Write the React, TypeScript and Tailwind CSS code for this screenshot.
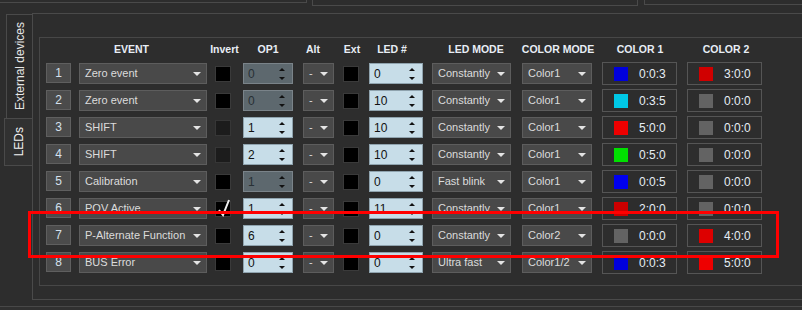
import React from 'react';

type Swatch = { color: string; value: string };

interface LedRow {
  n: number;
  event: string;
  invert: 'off' | 'dim' | 'on';
  op1: string;
  op1Disabled: boolean;
  led: string;
  mode: string;
  colorMode: string;
  c1: Swatch;
  c2: Swatch;
}

const GRAY = '#636363';

// rows of the LED table, top to bottom
const rows: LedRow[] = [
  { n: 1, event: 'Zero event', invert: 'off', op1: '0', op1Disabled: true, led: '0', mode: 'Constantly', colorMode: 'Color1', c1: { color: '#0000dc', value: '0:0:3' }, c2: { color: '#d00000', value: '3:0:0' } },
  { n: 2, event: 'Zero event', invert: 'off', op1: '0', op1Disabled: true, led: '10', mode: 'Constantly', colorMode: 'Color1', c1: { color: '#00c8e6', value: '0:3:5' }, c2: { color: GRAY, value: '0:0:0' } },
  { n: 3, event: 'SHIFT', invert: 'dim', op1: '1', op1Disabled: false, led: '10', mode: 'Constantly', colorMode: 'Color1', c1: { color: '#ee0000', value: '5:0:0' }, c2: { color: GRAY, value: '0:0:0' } },
  { n: 4, event: 'SHIFT', invert: 'dim', op1: '2', op1Disabled: false, led: '10', mode: 'Constantly', colorMode: 'Color1', c1: { color: '#00e000', value: '0:5:0' }, c2: { color: GRAY, value: '0:0:0' } },
  { n: 5, event: 'Calibration', invert: 'off', op1: '1', op1Disabled: true, led: '0', mode: 'Fast blink', colorMode: 'Color1', c1: { color: '#0000ee', value: '0:0:5' }, c2: { color: GRAY, value: '0:0:0' } },
  { n: 6, event: 'POV Active', invert: 'on', op1: '1', op1Disabled: false, led: '11', mode: 'Constantly', colorMode: 'Color1', c1: { color: '#cc0000', value: '2:0:0' }, c2: { color: GRAY, value: '0:0:0' } },
  { n: 7, event: 'P-Alternate Function', invert: 'off', op1: '6', op1Disabled: false, led: '0', mode: 'Constantly', colorMode: 'Color2', c1: { color: GRAY, value: '0:0:0' }, c2: { color: '#dd0000', value: '4:0:0' } },
  { n: 8, event: 'BUS Error', invert: 'off', op1: '0', op1Disabled: false, led: '0', mode: 'Ultra fast', colorMode: 'Color1/2', c1: { color: '#0000dc', value: '0:0:3' }, c2: { color: '#ee0000', value: '5:0:0' } },
];

function DownArrow() {
  return (
    <svg width="8" height="4" viewBox="0 0 8 4" className="shrink-0">
      <polygon points="0,0 8,0 4,4" fill="#e4e4e4" />
    </svg>
  );
}

function Dropdown({ text, className }: { text: string; className: string }) {
  return (
    <div className={`shrink-0 mt-px h-[21px] flex items-center justify-between pl-[5px] pr-[5px] bg-[#494949] border border-[#5d5d5d] text-[11px] text-[#dcdcdc] whitespace-nowrap overflow-hidden ${className}`}>
      <span>{text}</span>
      <DownArrow />
    </div>
  );
}

function SpinBox({ value, disabled, className }: { value: string; disabled: boolean; className: string }) {
  return (
    <div
      className={`shrink-0 mt-px h-[21px] flex items-center justify-between pl-[4px] pr-[7px] border text-[12px] ${
        disabled ? 'bg-[#5d686e] border-[#7a8389] text-[#283035]' : 'bg-[#c7dde8] border-[#8fa3ae] text-[#111111]'
      } ${className}`}
    >
      <span>{value}</span>
      <svg width="6" height="12" viewBox="0 0 6 12">
        <polygon points="3,0 6,3 0,3" fill="#111" />
        <polygon points="0,9 6,9 3,12" fill="#111" />
      </svg>
    </div>
  );
}

function CheckBox({ state, className }: { state: 'off' | 'dim' | 'on'; className: string }) {
  return (
    <div
      className={`relative shrink-0 mt-[4px] w-[16px] h-[16px] border ${
        state === 'dim' ? 'bg-[#1c1c1c] border-[#363636]' : 'bg-black border-[#3a3a3a]'
      } ${className}`}
    >
      {state === 'on' && (
        <svg width="16" height="20" viewBox="0 0 16 20" className="absolute left-0 top-[-5px]">
          <polyline points="3,13 7,18 13,3" fill="none" stroke="#f0f0f0" strokeWidth="2" />
        </svg>
      )}
    </div>
  );
}

function ColorBox({ swatch }: { swatch: Swatch }) {
  return (
    <div className="shrink-0 ml-[10px] w-[75px] h-[23px] flex items-center pl-[11px] border border-[#555555] text-[12px] text-[#e6edf5]">
      <div className="w-[14px] h-[14px] shrink-0" style={{ backgroundColor: swatch.color }} />
      <span className="ml-[11px]">{swatch.value}</span>
    </div>
  );
}

function HeaderRow() {
  return (
    <div className="h-[24px] flex items-center text-[10.5px] font-bold text-[#e8eef5] whitespace-nowrap">
      <div className="shrink-0 w-[171px] flex justify-center">EVENT</div>
      <div className="shrink-0 w-[15px] flex justify-center">Invert</div>
      <div className="shrink-0 w-[72px] flex justify-center">OP1</div>
      <div className="shrink-0 w-[18px] flex justify-center">Alt</div>
      <div className="shrink-0 w-[60px] flex justify-center">Ext</div>
      <div className="shrink-0 w-[20px] flex justify-center">LED #</div>
      <div className="shrink-0 w-[148px] flex justify-center">LED MODE</div>
      <div className="shrink-0 w-[16px] flex justify-center">COLOR MODE</div>
      <div className="shrink-0 w-[148px] flex justify-center">COLOR 1</div>
      <div className="shrink-0 w-[24px] flex justify-center">COLOR 2</div>
    </div>
  );
}

function Row({ row }: { row: LedRow }) {
  return (
    <div className="h-[23px] flex items-start">
      <div className="shrink-0 mt-px w-[25px] h-[20px] flex items-center justify-center bg-[#4b4b4b] border border-[#5f5f5f] text-[12px] text-[#d4e0ec]">
        {row.n}
      </div>
      <Dropdown text={row.event} className="ml-[8px] w-[128px]" />
      <CheckBox state={row.invert} className="ml-[8px]" />
      <SpinBox value={row.op1} disabled={row.op1Disabled} className="ml-[12px] w-[50px]" />
      <Dropdown text="-" className="ml-[10px] w-[31px]" />
      <CheckBox state="off" className="ml-[9px]" />
      <SpinBox value={row.led} disabled={false} className="ml-[10px] w-[54px]" />
      <Dropdown text={row.mode} className="ml-[9px] w-[79px]" />
      <Dropdown text={row.colorMode} className="ml-[11px] w-[70px]" />
      <ColorBox swatch={row.c1} />
      <ColorBox swatch={row.c2} />
    </div>
  );
}

export default function App() {
  return (
    <div className="relative w-[802px] h-[310px] overflow-hidden bg-[#2d2d2d] font-['Liberation_Sans',Arial,sans-serif]">
      {/* panels of the window above, only their bottom edges show */}
      <div className="flex items-start h-[13px]">
        <div className="shrink-0 w-[307px] h-[3px] border-b border-r border-[#4a4a4a]" />
        <div className="shrink-0 ml-[5px] w-[326px] h-[6px] border-b border-l border-r border-[#4a4a4a]" />
        <div className="ml-[6px] flex-1 h-[5px] border-b border-l border-[#4a4a4a]" />
      </div>

      <div className="flex h-[287px]">
        {/* vertical tabs */}
        <div className="shrink-0 w-[32px] flex flex-col items-end">
          <div className="mt-px w-[26px] h-[104px] flex items-center justify-center border-t border-l border-[#4a4a4a] bg-[#2b2b2b]">
            <span className="[writing-mode:vertical-rl] rotate-180 text-[12px] text-[#e6e6e6] whitespace-nowrap">External devices</span>
          </div>
          <div className="w-[28px] h-[48px] flex items-center justify-center border-t border-l border-b border-[#4a4a4a] bg-[#313131]">
            <span className="[writing-mode:vertical-rl] rotate-180 text-[12px] text-[#f0f0f0] whitespace-nowrap">LEDs</span>
          </div>
        </div>

        {/* tab page */}
        <div className="w-[800px] shrink-0 h-[287px] border border-[#4a4a4a] pl-[6px] pt-[23px]">
          <div className="w-[780px] h-[249px] border border-[#474747] pl-[6px]">
            <HeaderRow />
            <div className="flex flex-col gap-[4px]">
              {rows.map((r) => (
                <Row key={r.n} row={r} />
              ))}
            </div>
          </div>
        </div>
      </div>

      <div className="mt-[6px] h-[4px] border-t border-[#484848] bg-[#303030]" />

      {/* red highlight drawn over row 7 */}
      <div className="absolute left-[28px] top-[211px] w-[751px] h-[47px] border-[3px] border-[#ff0000] pointer-events-none" />
    </div>
  );
}
